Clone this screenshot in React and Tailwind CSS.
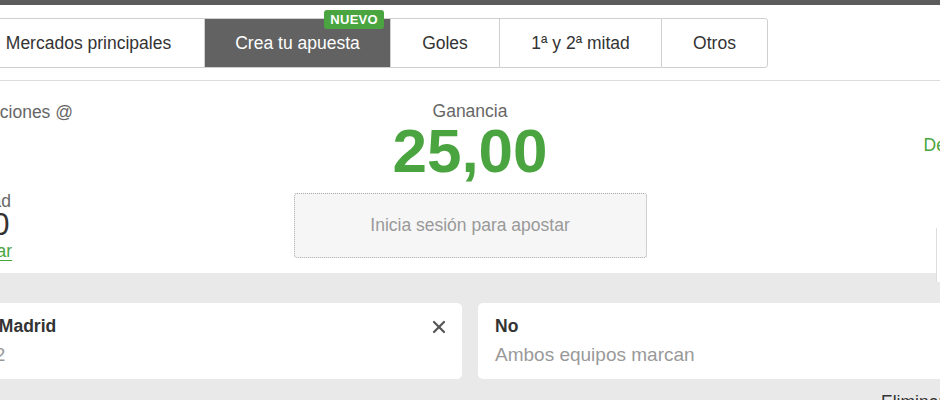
import { X } from "lucide-react";

const TABS = [
  { label: "Mercados principales", w: "w-[232px]" },
  { label: "Crea tu apuesta", w: "w-[186px]", active: true, badge: "NUEVO" },
  { label: "Goles", w: "w-[109px]" },
  { label: "1ª y 2ª mitad", w: "w-[162px]" },
  { label: "Otros", w: "w-[107px]", last: true },
];

const Tab = ({ tab }) => (
  <div
    className={`relative flex items-center justify-center border-y border-l border-[#cfcfcf] text-[17.5px] ${tab.w} ${
      tab.active ? "bg-[#626262] text-white" : "bg-white text-[#333]"
    } ${tab.last ? "border-r rounded-r-[3px]" : ""}`}
  >
    {tab.label}
    {tab.badge && (
      <span className="absolute -top-[9px] right-[6px] h-[19px] px-[6px] rounded-[3px] bg-[#4aa43f] text-white text-[13px] font-bold leading-[19px] tracking-[0.3px]">
        {tab.badge}
      </span>
    )}
  </div>
);

const Card = ({ title, subtitle, subClass = "", closable, className }) => (
  <div className={`h-[76px] bg-white rounded-[5px] pt-[13px] flex justify-between ${className}`}>
    <div>
      <div className="text-[17.5px] font-bold text-[#333] leading-[20px] whitespace-nowrap">{title}</div>
      <div className={`mt-[8px] text-[19px] text-[#999] leading-[21px] whitespace-nowrap ${subClass}`}>{subtitle}</div>
    </div>
    {closable && <X className="mt-[1px] w-[20px] h-[20px] text-[#555]" strokeWidth={2.6} />}
  </div>
);

export default function App() {
  return (
    <div className="relative w-[940px] h-[400px] overflow-hidden bg-white font-['Liberation_Sans',Arial,sans-serif]">
      {/* barra superior */}
      <div className="h-[5px] bg-[#5c5c5c]" />

      {/* pestañas */}
      <div className="h-[76px] pt-[13px] border-b border-[#dcdcdc]">
        <div className="flex h-[50px] -ml-[28px]">
          {TABS.map((t) => (
            <Tab key={t.label} tab={t} />
          ))}
        </div>
      </div>

      {/* resumen de apuesta */}
      <div className="grid grid-cols-[minmax(0,1fr)_353px_minmax(0,1fr)] h-[192px] bg-white">
        <div className="flex flex-col pt-[21px] -ml-[44px] text-[17.5px] text-[#666]">
          <div className="leading-[20px] whitespace-nowrap">Selecciones @</div>
          <div className="mt-[69px] -ml-[15px] leading-[20px]">Cantidad</div>
          <div className="-ml-[24px] text-[31px] leading-[28px] text-[#333]">10,00</div>
          <div className="mt-[2px] -ml-[10px] leading-[20px] text-[#4aa43f] underline underline-offset-[3px]">Cambiar</div>
        </div>

        <div className="flex flex-col items-center pt-[20px]">
          <div className="text-[17.5px] leading-[20px] text-[#666]">Ganancia</div>
          <div className="text-[62px] font-bold leading-[60px] text-[#4aa43f]">25,00</div>
          <div className="mt-[12px] w-full h-[65px] flex items-center justify-center bg-[#f6f6f6] border border-dotted border-[#a8a8a8] rounded-[3px] text-[17.5px] text-[#999]">
            Inicia sesión para apostar
          </div>
        </div>

        <div className="pt-[54px] pl-[277px] text-[17.5px] leading-[20px] text-[#4aa43f] whitespace-nowrap">Detalles</div>
      </div>

      {/* selecciones */}
      <div className="bg-[#e9e9e9] h-[200px] pt-[30px]">
        <div className="grid grid-cols-[522px_1fr] gap-[16px] -ml-[60px] -mr-[40px]">
          <Card title="Real Madrid" subtitle="1 X 2" subClass="ml-[4px]" closable className="pl-[17px] pr-[13px]" />
          <Card title="No" subtitle="Ambos equipos marcan" className="pl-[17px]" />
        </div>
        <div className="mt-[13px] pl-[881px] text-[17.5px] leading-[20px] text-[#333] whitespace-nowrap">Eliminar todas</div>
      </div>

      {/* borde del panel flotante */}
      <div className="absolute left-[936px] top-[228px] w-[10px] h-[54px] bg-white border-l border-[#dddddd]" />
    </div>
  );
}
